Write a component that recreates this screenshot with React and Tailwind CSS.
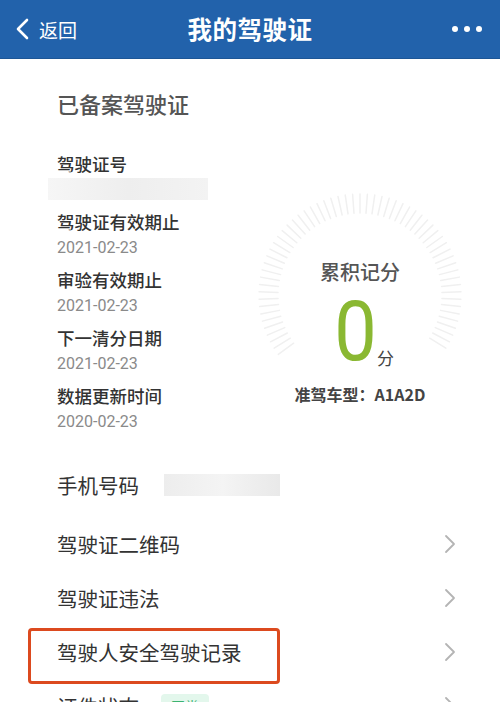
import React from 'react';

const font = { fontFamily: '"Noto Sans CJK SC", "Noto Sans", sans-serif' };

function Chevron() {
  return (
    <svg width="12" height="20" viewBox="0 0 12 20" className="flex-shrink-0">
      <path d="M2 2 L10 10 L2 18" fill="none" stroke="#b4b4b4" strokeWidth="1.8" strokeLinecap="round" strokeLinejoin="round" />
    </svg>
  );
}

function Gauge() {
  const ticks = [];
  for (let a = -126; a <= 126; a += 4.2) {
    const r = (a * Math.PI) / 180;
    const s = Math.sin(r), c = Math.cos(r);
    ticks.push(
      <line key={a} x1={102 + s * 82} y1={102 - c * 82} x2={102 + s * 101} y2={102 - c * 101} stroke="#f0f0f0" strokeWidth="1.5" strokeLinecap="round" />
    );
  }
  return (
    <svg width="204" height="204" viewBox="0 0 204 204" className="absolute inset-0">
      {ticks}
    </svg>
  );
}

function InfoItem({ label, value }) {
  return (
    <div>
      <div className="text-[17.5px] leading-[24px] font-medium text-[#333]">{label}</div>
      <div className="text-[16px] leading-[24px] text-[#8a8a8a] mt-[2px]" style={{ fontFamily: 'Roboto, "Noto Sans", sans-serif' }}>{value}</div>
    </div>
  );
}

function Row({ children, arrow = true }) {
  return (
    <div className="h-[54px] flex items-center justify-between pl-[57px] pr-[44px]">
      <div className="flex items-center text-[20.5px] text-[#333]">{children}</div>
      {arrow && <Chevron />}
    </div>
  );
}

export default function App() {
  return (
    <div className="w-[500px] h-[702px] overflow-hidden bg-white" style={font}>
      {/* header */}
      <div className="h-[59px] bg-[#2262ab] flex items-center justify-between px-4 border-b border-[#1d5696]">
        <div className="flex items-center gap-[10px] text-white w-[100px]">
          <svg width="13" height="22" viewBox="0 0 13 22">
            <path d="M11 2 L2 11 L11 20" fill="none" stroke="white" strokeWidth="2.6" strokeLinecap="round" strokeLinejoin="round" />
          </svg>
          <span className="text-[19px] leading-none">返回</span>
        </div>
        <div className="text-white text-[24.5px] font-bold tracking-[0.5px]">我的驾驶证</div>
        <div className="w-[100px] flex justify-end gap-[6px] pr-[2px]">
          <span className="w-[6px] h-[6px] rounded-full bg-white" />
          <span className="w-[6px] h-[6px] rounded-full bg-white" />
          <span className="w-[6px] h-[6px] rounded-full bg-white" />
        </div>
      </div>

      {/* license info */}
      <div className="flex">
        <div className="w-[201px] ml-[57px] pt-[29px] flex-shrink-0">
          <div className="text-[22px] leading-[30px] font-medium text-[#555]">已备案驾驶证</div>
          <div className="mt-[34px] flex flex-col gap-[8px]">
            <div>
              <div className="text-[17.5px] leading-[24px] font-medium text-[#333]">驾驶证号</div>
              <div className="h-[26px] flex items-center -ml-[9px]">
                <div className="w-[160px] h-[22px] bg-gradient-to-r from-[#f6f6f6] via-[#eeeeee] to-[#f3f3f3]" />
              </div>
            </div>
            <InfoItem label="驾驶证有效期止" value="2021-02-23" />
            <InfoItem label="审验有效期止" value="2021-02-23" />
            <InfoItem label="下一清分日期" value="2021-02-23" />
            <InfoItem label="数据更新时间" value="2020-02-23" />
          </div>
        </div>
        <div className="pt-[134px]">
          <div className="relative w-[204px] h-[204px] flex flex-col items-center">
            <Gauge />
            <div className="relative mt-[65px] text-[20px] leading-[28px] font-medium text-[#555]">累积记分</div>
            <div className="relative flex items-end mt-[14px] ml-[6px]">
              <span className="text-[84px] leading-[64px] font-normal text-[#8ab832] inline-block scale-x-90" style={{ fontFamily: 'Roboto, "Noto Sans", sans-serif' }}>0</span>
              <span className="text-[17px] leading-[20px] text-[#444] -ml-[2px] -mb-[4px]">分</span>
            </div>
          </div>
          <div className="-mt-[15px] w-[204px] text-center text-[16px] leading-[24px] font-bold text-[#444]">准驾车型：A1A2D</div>
        </div>
      </div>

      {/* list */}
      <div className="mt-[24px]">
        <Row arrow={false}>
          <span>手机号码</span>
          <span className="ml-[25px] w-[116px] h-[22px] bg-gradient-to-r from-[#ededed] via-[#f4f4f4] to-[#e9e9e9]" />
        </Row>
        <div className="h-[5px]" />
        <Row>驾驶证二维码</Row>
        <Row>驾驶证违法</Row>
        <div className="relative">
          <Row>驾驶人安全驾驶记录</Row>
          <div className="absolute left-[28px] top-[3px] w-[252px] h-[56px] border-[3px] border-[#dc4a1f] rounded-[4px]" />
        </div>
        <Row>
          <span>证件状态</span>
          <span className="ml-[22px] px-[10px] h-[24px] rounded-[4px] bg-[#e3f7ec] text-[14px] leading-[24px] text-[#3cb371]">正常</span>
        </Row>
      </div>
    </div>
  );
}
